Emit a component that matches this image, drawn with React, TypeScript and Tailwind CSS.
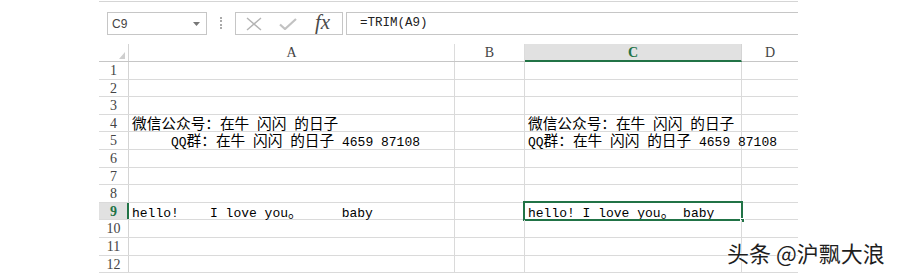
import React from "react";

const ROW_HEIGHTS = [
  "h-[18px]",
  "h-[17px]",
  "h-[18px]",
  "h-[17px]",
  "h-[18px]",
  "h-[18px]",
  "h-[17px]",
  "h-[18px]",
  "h-[17px]",
  "h-[18px]",
  "h-[18px]",
  "h-[17px]",
];

const COLS = [
  { key: "A", w: "w-[326px]" },
  { key: "B", w: "w-[70px]" },
  { key: "C", w: "w-[217px]" },
  { key: "D", w: "w-[56px]" },
];

const CELLS: Record<string, string> = {
  A4: "微信公众号：在牛 闪闪 的日子",
  A5: "     QQ群：在牛 闪闪 的日子 4659 87108",
  A9: "hello!    I love you。     baby",
  C4: "微信公众号：在牛 闪闪 的日子",
  C5: "QQ群：在牛 闪闪 的日子 4659 87108",
  C9: "hello! I love you。 baby",
};

const WIDE = /[\u3000-\u30ff\u4e00-\u9fff\uff00-\uffef]/;

// SimSun-like mix: half-width latin in mono, full-width CJK
function CellText({ text }: { text: string }) {
  const parts =
    text.match(
      /[\u3000-\u30ff\u4e00-\u9fff\uff00-\uffef]+|[^\u3000-\u30ff\u4e00-\u9fff\uff00-\uffef]+/g
    ) ?? [];
  return (
    <span className="whitespace-pre leading-none">
      {parts.map((p, i) =>
        WIDE.test(p) ? (
          <span
            key={i}
            className="inline-block font-['Noto_Sans_CJK_SC',sans-serif] text-[14.67px] leading-none"
          >
            {p}
          </span>
        ) : (
          <span
            key={i}
            className="inline-block font-['Liberation_Mono',monospace] text-[13px] leading-none"
          >
            {p}
          </span>
        )
      )}
    </span>
  );
}

function FormulaBar() {
  return (
    <div className="mt-[1px] flex h-[43px] items-start border-t border-[#d5d5d5] pt-[10px]">
      <div className="ml-[8px] flex h-[23px] w-[100px] items-center justify-between border border-[#c6c6c6] pl-[4px] pr-[6px]">
        <span className="font-['Liberation_Sans',sans-serif] text-[12px] text-[#444]">
          C9
        </span>
        <svg width="7" height="4" viewBox="0 0 7 4">
          <path d="M0 0 H7 L3.5 4 Z" fill="#777" />
        </svg>
      </div>
      <div className="ml-[13px] mt-[5px] h-[12px] border-l-2 border-dotted border-[#aaa]" />
      <div className="ml-[13px] flex h-[23px] w-[108px] items-center border border-[#c6c6c6]">
        <svg className="ml-[10px]" width="16" height="14" viewBox="0 0 16 14">
          <path d="M1 1 L15 13 M15 1 L1 13" stroke="#b4b4b4" strokeWidth="1.4" fill="none" />
        </svg>
        <svg className="ml-[17px]" width="18" height="12" viewBox="0 0 18 12">
          <path d="M1 6.5 L6 11 L17 1" stroke="#c2c2c2" strokeWidth="2.2" fill="none" />
        </svg>
        <span className="ml-[18px] mt-[-2px] font-['Liberation_Serif',serif] text-[21px] italic leading-none text-[#4a4a4a]">
          fx
        </span>
      </div>
      <div className="ml-[3px] flex h-[23px] flex-1 items-center border-y border-l border-[#c6c6c6] pl-[13px]">
        <span className="font-['Liberation_Mono',monospace] text-[12.5px] text-[#222]">
          =TRIM(A9)
        </span>
      </div>
    </div>
  );
}

function HeaderRow() {
  return (
    <div className="flex h-[18px] border-b border-[#c6c6c6]">
      <div className="flex w-[30px] items-end justify-end border-r border-[#d4d4d4] pb-[2px] pr-[3px]">
        <svg width="6" height="7" viewBox="0 0 6 7">
          <path d="M6 0 V7 H0 Z" fill="#cfcfcf" />
        </svg>
      </div>
      {COLS.map((c) => {
        const sel = c.key === "C";
        return (
          <div
            key={c.key}
            className={
              sel
                ? `${c.w} mb-[-1px] flex items-center justify-center border-r border-b-2 border-r-[#d4d4d4] border-b-[#217346] bg-[#e1e1e1] font-['Liberation_Serif',serif] text-[14px] font-bold text-[#217346]`
                : `${c.w} flex items-center justify-center border-r border-[#dcdcdc] font-['Liberation_Serif',serif] text-[14px] text-[#444] last:border-r-0`
            }
          >
            {c.key}
          </div>
        );
      })}
    </div>
  );
}

function Row({ n, h }: { n: number; h: string }) {
  const selRow = n === 9;
  return (
    <div className={`${h} flex border-b border-[#dadada]`}>
      <div
        className={
          selRow
            ? "flex w-[30px] items-center justify-center border-r-2 border-[#217346] bg-[#e1e1e1] pl-[1px] font-['Liberation_Serif',serif] text-[14px] font-bold text-[#217346]"
            : "flex w-[30px] items-center justify-center border-r border-[#d4d4d4] font-['Liberation_Serif',serif] text-[14px] text-[#444]"
        }
      >
        {n}
      </div>
      {COLS.map((c) => {
        const id = `${c.key}${n}`;
        const text = CELLS[id];
        const active = id === "C9";
        return (
          <div
            key={c.key}
            className={`${c.w} relative flex items-center whitespace-pre border-r border-[#dadada] pl-[3px] leading-none text-black last:border-r-0`}
          >
            {text && <CellText text={text} />}
            {active && (
              <div className="absolute bottom-[-2px] left-[-2px] right-[-2px] top-[-2px] border-2 border-[#217346]">
                <div className="absolute bottom-[-4px] right-[-4px] h-[5px] w-[5px] border border-white bg-[#217346]" />
              </div>
            )}
          </div>
        );
      })}
    </div>
  );
}

export default function App() {
  return (
    <div className="relative h-[275px] w-[900px] overflow-hidden bg-white">
      <div className="ml-[99px] w-[699px]">
        <FormulaBar />
        <HeaderRow />
        {ROW_HEIGHTS.map((h, i) => (
          <Row key={i} n={i + 1} h={h} />
        ))}
      </div>
      <div className="absolute left-[727px] top-[241px] whitespace-pre font-['Noto_Sans_CJK_SC',sans-serif] text-[22px] leading-none text-[#1e1e1e] [text-shadow:0_0_2px_#fff,0_0_2px_#fff,0_0_3px_#fff]">
        头条 @沪飘大浪
      </div>
    </div>
  );
}
